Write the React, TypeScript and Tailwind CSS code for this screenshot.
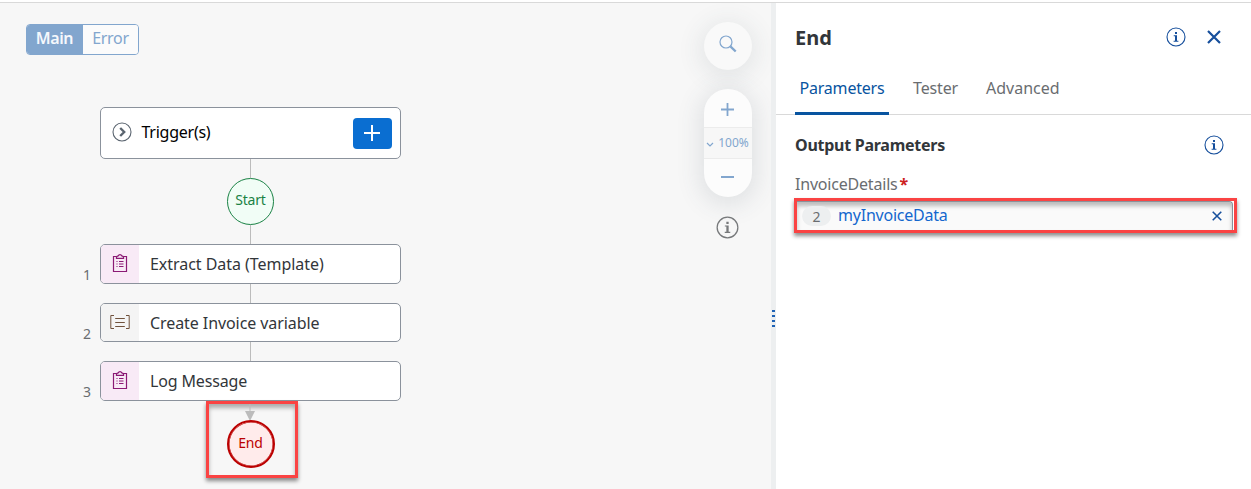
import React from "react";

function InfoIcon({ className }: { className: string }) {
  return (
    <svg viewBox="0 0 20 20" className={className} fill="none">
      <circle cx="10" cy="10" r="9" stroke="currentColor" strokeWidth="1.1" />
      <path d="M9 4.9h2v2H9zM7.7 8.2H11v5.6h1.4v1H7.6v-1H9V9.2H7.7z" fill="currentColor" />
    </svg>
  );
}

function CloseIcon({ className }: { className: string }) {
  return (
    <svg viewBox="0 0 14 14" className={className} fill="none" stroke="currentColor" strokeWidth="2.2">
      <path d="M1 1l12 12M13 1L1 13" />
    </svg>
  );
}

function ClipboardIcon() {
  return (
    <svg viewBox="0 0 16 20" className="mb-0.5 h-5 w-4 text-[#8b1a75]" fill="none" stroke="currentColor">
      <path d="M4 3.5H1.5v15h13v-15H12" strokeWidth="1.2" />
      <path d="M4.5 5.4V3.6L6.3 2.8a1.8 1.8 0 013.4 0l1.8.8v1.8z" strokeWidth="1.3" />
      <path d="M4.5 8.5h1M7 8.5h4.5M4.5 11h1M7 11h4.5M4.5 13.5h1M7 13.5h4.5" strokeWidth="1.2" />
    </svg>
  );
}

function VariableIcon() {
  return (
    <svg viewBox="0 0 20 16" className="mb-0.5 h-4 w-5 text-[#70523c]" fill="none" stroke="currentColor">
      <path d="M4 1.5H.8v13H4M16 1.5h3.2v13H16" strokeWidth="1" />
      <path d="M5.2 4.5h9.6M5.2 8.5h9.6M5.2 12.5h9.6" strokeWidth="1.1" />
    </svg>
  );
}

function Line({ className }: { className: string }) {
  return <div className={"w-px bg-[#bcbcbc] " + className} />;
}

function Step({ num, label, kind, size, text }: { num: string; label: string; kind: "form" | "variable"; size: string; text: string }) {
  return (
    <div className={"flex w-[319px] shrink-0 self-start " + size}>
      <div className="w-[18px] pl-px pt-[21px] text-[14px] leading-5 text-[#6a6d70]">{num}</div>
      <div className="flex w-[301px] overflow-hidden rounded-[5px] border border-[#8b929c] bg-white">
        <div className={"flex w-[38px] items-center justify-center " + (kind === "form" ? "bg-[#f8eaf6]" : "bg-[#f4f4f4]")}>
          {kind === "form" ? <ClipboardIcon /> : <VariableIcon />}
        </div>
        <div className={"flex items-center pl-[11px] text-[16px] text-[#32363a] " + text}>{label}</div>
      </div>
    </div>
  );
}

function Canvas() {
  return (
    <div className="flex w-[771px] shrink-0 justify-between bg-[#f7f7f7]">
      <div className="flex flex-col pl-[26px] pt-[21px]">
        <div className="flex h-[31px] w-[113px] overflow-hidden rounded-[4px] border border-[#82a6ce] text-[16px] leading-[27px]">
          <div className="w-14 bg-[#82a6ce] pr-px text-center font-semibold tracking-[-0.4px] text-[#f5f8fc]">Main</div>
          <div className="flex-1 bg-[#fbfbfb] text-center tracking-[-0.3px] text-[#82a6ce]">Error</div>
        </div>
        <div className="ml-14 mt-[52px] flex w-[337px] flex-col items-center">
          <div className="mr-px flex h-[52px] w-[301px] shrink-0 items-center rounded-[5px] border border-[#8b929c] bg-white pl-[11px] pr-2">
            <svg viewBox="0 0 20 20" className="mb-0.5 size-5 text-[#5b6570]" fill="none" stroke="currentColor">
              <circle cx="10" cy="10" r="9" strokeWidth="1.1" />
              <path d="M8.2 6l4 4-4 4" strokeWidth="2.4" />
            </svg>
            <span className="mb-0.5 ml-[10px] text-[16px] tracking-[-0.25px] text-black">Trigger(s)</span>
            <div className="ml-auto flex h-[31px] w-[39px] items-center justify-center rounded-[4px] bg-[#0a6ed1]">
              <svg viewBox="0 0 18 18" className="size-[18px] text-white" fill="none" stroke="currentColor" strokeWidth="2">
                <path d="M9 1v16M1 9h16" />
              </svg>
            </div>
          </div>
          <Line className="h-[19px]" />
          <div className="flex size-[47px] shrink-0 items-center justify-center rounded-full border-[1.5px] border-[#1a8245] bg-[#f1fdf6] pb-1 text-[14px] tracking-[-0.2px] text-[#1a8245]">Start</div>
          <Line className="h-[19px]" />
          <Step num="1" label="Extract Data (Template)" kind="form" size="h-10" text="tracking-[-0.04px]" />
          <Line className="h-[19px]" />
          <Step num="2" label="Create Invoice variable" kind="variable" size="h-[39px]" text="tracking-[-0.08px]" />
          <Line className="h-[19px]" />
          <Step num="3" label="Log Message" kind="form" size="h-10" text="tracking-[-0.15px]" />
          <div className="ml-[2px] flex h-[77px] w-[92px] shrink-0 flex-col items-center border-[3px] border-[#fa4343] shadow-[0_3px_4px_rgba(0,0,0,0.45),inset_0_4px_4px_rgba(0,0,0,0.3)]">
            <svg viewBox="0 0 10 17" className="-ml-[3px] h-[17px] w-[10px] shrink-0 text-[#bcbcbc]" fill="currentColor">
              <path d="M4.5 0h1v7H10L5 17 0 7h4.5z" />
            </svg>
            <div className="-ml-[2px] -mt-px flex size-12 shrink-0 items-center justify-center rounded-full border-[2px] border-[#bb0000] bg-[#ffebeb] pb-1 text-[14px] tracking-[-0.2px] text-[#bb0000] shadow-[inset_0_0_0_0.5px_#bb0000]">End</div>
          </div>
        </div>
      </div>
      <div className="flex w-[87px] flex-col items-center pt-[19px]">
        <div className="flex size-12 shrink-0 items-center justify-center rounded-full bg-[#f9f9f9] pb-1 shadow-[0_4px_24px_4px_rgba(60,75,90,0.1)]">
          <svg viewBox="0 0 18 18" className="size-[18px] text-[#82a6ce]" fill="none" stroke="currentColor">
            <circle cx="7" cy="7" r="6" strokeWidth="1.2" />
            <path d="M11.4 11.4l5.3 5.1" strokeWidth="2.3" />
          </svg>
        </div>
        <div className="mt-[19px] flex h-[108px] w-12 shrink-0 flex-col overflow-hidden rounded-[24px] bg-[#fcfcfc] text-[#82a6ce] shadow-[0_4px_24px_4px_rgba(60,75,90,0.13)]">
          <div className="flex h-[38px] items-center justify-center pt-0.5">
            <svg viewBox="0 0 13 13" className="size-[13px]" fill="none" stroke="currentColor" strokeWidth="1.8">
              <path d="M6.5 0v13M0 6.5h13" />
            </svg>
          </div>
          <div className="flex h-8 items-center justify-center gap-1 border-y border-[#ececec] bg-[#f7f7f7] text-[12px]">
            <svg viewBox="0 0 8 5" className="mt-0.5 h-[5px] w-2" fill="none" stroke="currentColor" strokeWidth="1.2">
              <path d="M1 1l3 3 3-3" />
            </svg>
            <span>100%</span>
          </div>
          <div className="flex flex-1 items-center justify-center pb-0.5">
            <div className="h-0.5 w-[13px] bg-[#82a6ce]" />
          </div>
        </div>
        <InfoIcon className="mt-[19px] size-[23px] text-[#77797b]" />
      </div>
    </div>
  );
}

function Panel() {
  return (
    <div className="min-w-0 flex-1 bg-white">
      <div className="flex h-[68px] items-center pl-[19px] pr-[30px] text-[#164f9c]">
        <h1 className="pt-px text-[20px] font-bold text-[#32363a]">End</h1>
        <InfoIcon className="mb-px ml-auto size-5" />
        <CloseIcon className="ml-[21px] size-[14px]" />
      </div>
      <div className="flex h-[44px] gap-6 border-b border-[#d9d9d9] pl-[19px] text-[16px] leading-[34px] text-[#6a6d70]">
        <div className="h-[44px] w-[94px] border-b-[3px] border-[#0854a0] text-center tracking-[-0.2px] text-[#0854a0]">Parameters</div>
        <div className="w-[45px] whitespace-nowrap tracking-[-0.15px]">Tester</div>
        <div className="ml-1">Advanced</div>
      </div>
      <div className="flex h-[60px] items-center pl-[19px] pr-[27px] text-[#164f9c]">
        <h2 className="text-[16px] font-bold tracking-[-0.26px] text-[#32363a]">Output Parameters</h2>
        <InfoIcon className="mb-px ml-auto size-5" />
      </div>
      <div className="h-[23px] pl-[19px] text-[16px] leading-[18px] tracking-[-0.2px] text-[#6a6d70]">
        InvoiceDetails<span className="ml-0.5 font-bold text-[#cc2020]">*</span>
      </div>
      <div className="ml-[18px] flex h-[35px] w-[443px] border-[3px] border-[#fa4343] shadow-[0_3px_4px_rgba(0,0,0,0.45)]">
        <div className="mr-px flex flex-1 items-center rounded-tr-[4px] border-r border-t border-[#89919a] bg-[#fafafa] pl-[5px] pr-[10px] text-[#164f9c] shadow-[inset_0_4px_4px_rgba(0,0,0,0.25)]">
          <span className="flex h-5 w-[29px] items-center justify-center rounded-full bg-[#edeff0] text-[14px] text-[#6a6d70]">2</span>
          <span className="mb-0.5 ml-[7px] text-[16px] tracking-[-0.22px] text-[#1467ce]">myInvoiceData</span>
          <CloseIcon className="ml-auto size-[10px]" />
        </div>
      </div>
    </div>
  );
}

export default function App() {
  return (
    <div className="flex h-[489px] w-[1251px] flex-col overflow-hidden bg-white font-['Noto_Sans',sans-serif]">
      <div className="h-[3px] shrink-0 border-b border-[#d9d9d9]" />
      <div className="flex min-h-0 flex-1">
        <Canvas />
        <div className="flex w-[5px] shrink-0 flex-col items-center gap-[3px] bg-[#edeff0] pt-[307px]">
          <i className="h-0.5 w-[3px] shrink-0 bg-[#1f62b5]" />
          <i className="h-0.5 w-[3px] shrink-0 bg-[#1f62b5]" />
          <i className="h-0.5 w-[3px] shrink-0 bg-[#1f62b5]" />
          <i className="h-0.5 w-[3px] shrink-0 bg-[#1f62b5]" />
        </div>
        <Panel />
      </div>
    </div>
  );
}
